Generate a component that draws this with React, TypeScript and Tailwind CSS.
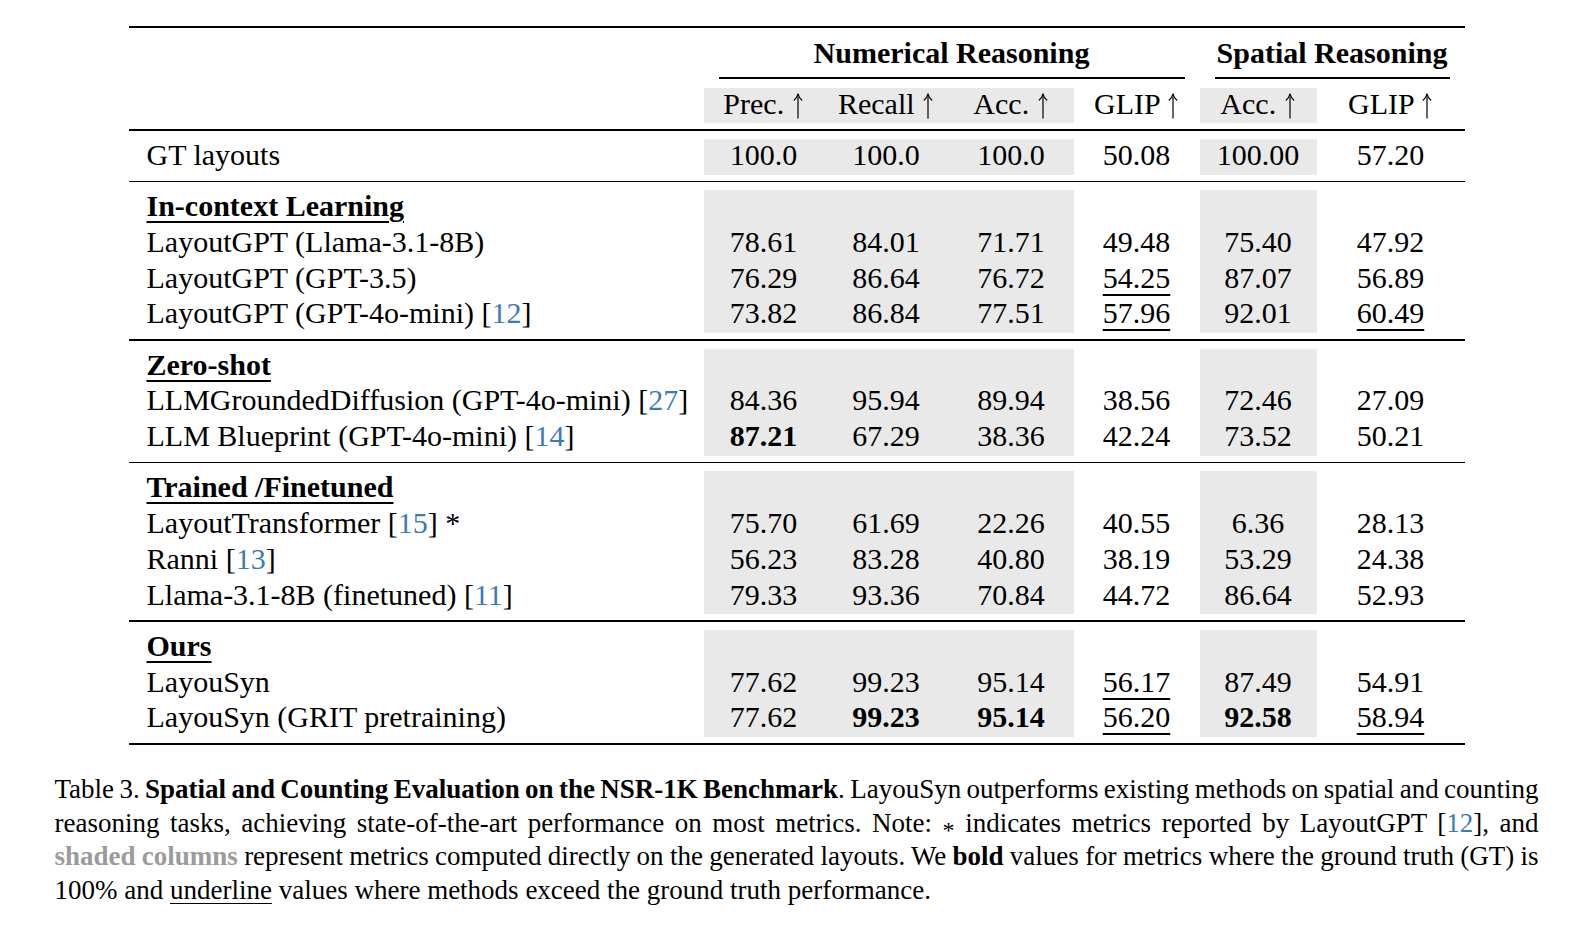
import React from "react";

type Row = { label: React.ReactNode; values: string[] };
type Section = { heading?: string; rows: Row[] };

const Cite = ({ n }: { n: string }) => (
  <>
    [<span className="text-[#3d7ab8]">{n}</span>]
  </>
);

const Up = () => (
  <svg width="12" height="27" viewBox="0 0 12 27" className="inline-block align-[-5px]">
    <path d="M6 2.5V26.5" stroke="black" strokeWidth="1.2" fill="none" />
    <path d="M1.8 8.5C4 6.8 5.4 4.8 6 1.5C6.6 4.8 8 6.8 10.2 8.5" stroke="black" strokeWidth="1.1" fill="none" />
  </svg>
);

const sections: Section[] = [
  {
    rows: [{ label: "GT layouts", values: ["100.0", "100.0", "100.0", "50.08", "100.00", "57.20"] }],
  },
  {
    heading: "In-context Learning",
    rows: [
      { label: "LayoutGPT (Llama-3.1-8B)", values: ["78.61", "84.01", "71.71", "49.48", "75.40", "47.92"] },
      { label: "LayoutGPT (GPT-3.5)", values: ["76.29", "86.64", "76.72", "u:54.25", "87.07", "56.89"] },
      {
        label: <>LayoutGPT (GPT-4o-mini) <Cite n="12" /></>,
        values: ["73.82", "86.84", "77.51", "u:57.96", "92.01", "u:60.49"],
      },
    ],
  },
  {
    heading: "Zero-shot",
    rows: [
      {
        label: <>LLMGroundedDiffusion (GPT-4o-mini) <Cite n="27" /></>,
        values: ["84.36", "95.94", "89.94", "38.56", "72.46", "27.09"],
      },
      {
        label: <>LLM Blueprint (GPT-4o-mini) <Cite n="14" /></>,
        values: ["b:87.21", "67.29", "38.36", "42.24", "73.52", "50.21"],
      },
    ],
  },
  {
    heading: "Trained /Finetuned",
    rows: [
      {
        label: <>LayoutTransformer <Cite n="15" /> *</>,
        values: ["75.70", "61.69", "22.26", "40.55", "6.36", "28.13"],
      },
      { label: <>Ranni <Cite n="13" /></>, values: ["56.23", "83.28", "40.80", "38.19", "53.29", "24.38"] },
      {
        label: <>Llama-3.1-8B (finetuned) <Cite n="11" /></>,
        values: ["79.33", "93.36", "70.84", "44.72", "86.64", "52.93"],
      },
    ],
  },
  {
    heading: "Ours",
    rows: [
      { label: "LayouSyn", values: ["77.62", "99.23", "95.14", "u:56.17", "87.49", "54.91"] },
      {
        label: "LayouSyn (GRIT pretraining)",
        values: ["77.62", "b:99.23", "b:95.14", "u:56.20", "b:92.58", "u:58.94"],
      },
    ],
  },
];

const shaded = [true, true, true, false, true, false];
const grid = "grid grid-cols-[575px_120px_125px_125px_126px_117px_148px]";
const cell = "h-[35.75px] leading-[31.5px] text-center";
const labelCell = "h-[35.75px] leading-[31.5px] pl-[18px] whitespace-nowrap";

function Value({ v }: { v: string }) {
  if (v.startsWith("b:")) return <span className="font-bold">{v.slice(2)}</span>;
  if (v.startsWith("u:"))
    return <span className="underline decoration-[1.5px] underline-offset-[6px]">{v.slice(2)}</span>;
  return <span>{v}</span>;
}

function SectionBlock({ s }: { s: Section }) {
  return (
    <div className="pt-[8px] pb-[6px]">
      {s.heading && (
        <div className={grid}>
          <div className={`${labelCell} font-bold`}>
            <span className="underline decoration-[1.5px] underline-offset-[5px]">{s.heading}</span>
          </div>
          {shaded.map((sh, i) => (
            <div key={i} className={`${cell} ${sh ? "bg-[#e9e9e9]" : ""}`} />
          ))}
        </div>
      )}
      {s.rows.map((r, ri) => (
        <div key={ri} className={grid}>
          <div className={labelCell}>{r.label}</div>
          {r.values.map((v, i) => (
            <div key={i} className={`${cell} ${shaded[i] ? "bg-[#e9e9e9]" : ""}`}>
              <Value v={v} />
            </div>
          ))}
        </div>
      ))}
    </div>
  );
}

const subHeads = ["Prec.", "Recall", "Acc.", "GLIP", "Acc.", "GLIP"];

export default function App() {
  return (
    <div className="min-h-screen bg-white text-black font-['Liberation_Serif','Times_New_Roman',serif]">
      <div className="mx-auto w-[1336px] pt-[26px] text-[30px]">
        <div className="h-[2px] bg-black" />

        <div className="pt-[7px] pb-[6px]">
          <div className={grid}>
            <div />
            <div className="col-span-4 h-[35.75px] leading-[35.75px] text-center font-bold">Numerical Reasoning</div>
            <div className="col-span-2 h-[35.75px] leading-[35.75px] text-center font-bold">Spatial Reasoning</div>
          </div>
          <div className={`${grid} mt-[6.5px]`}>
            <div />
            <div className="col-span-4 px-[15px]">
              <div className="h-[1.25px] bg-black" />
            </div>
            <div className="col-span-2 px-[15px]">
              <div className="h-[1.25px] bg-black" />
            </div>
          </div>
          <div className={`${grid} mt-[9px]`}>
            <div />
            {subHeads.map((h, i) => (
              <div key={i} className={`${cell} whitespace-nowrap ${shaded[i] ? "bg-[#e9e9e9]" : ""}`}>
                {h} <Up />
              </div>
            ))}
          </div>
        </div>

        {sections.map((s, i) => (
          <React.Fragment key={i}>
            <div className="h-[1.5px] bg-black" />
            <SectionBlock s={s} />
          </React.Fragment>
        ))}

        <div className="h-[2px] bg-black" />
      </div>

      <div className="mx-auto mt-[28px] w-[1484px] text-[27px] leading-[33.5px]">
        <div className="text-justify [text-align-last:justify] whitespace-nowrap [word-spacing:-4px]">
          Table 3. <span className="font-bold">Spatial and Counting Evaluation on the NSR-1K Benchmark</span>.
          LayouSyn outperforms existing methods on spatial and counting
        </div>
        <div className="h-[33.5px] text-justify [text-align-last:justify] whitespace-nowrap [word-spacing:-4px]">
          reasoning tasks, achieving state-of-the-art performance on most metrics. Note:{" "}
          <span className="text-[24px] leading-[0px] align-[-6px]">*</span> indicates metrics reported by LayoutGPT{" "}
          <Cite n="12" />, and
        </div>
        <div className="text-justify [text-align-last:justify] whitespace-nowrap [word-spacing:-4px]">
          <span className="font-bold text-[#9b9b9b]">shaded columns</span> represent metrics computed directly on the
          generated layouts. We <span className="font-bold">bold</span> values for metrics where the ground truth (GT) is
        </div>
        <div className="whitespace-nowrap">
          100% and <span className="underline decoration-[1px] underline-offset-[4px]">underline</span> values where
          methods exceed the ground truth performance.
        </div>
      </div>
    </div>
  );
}
